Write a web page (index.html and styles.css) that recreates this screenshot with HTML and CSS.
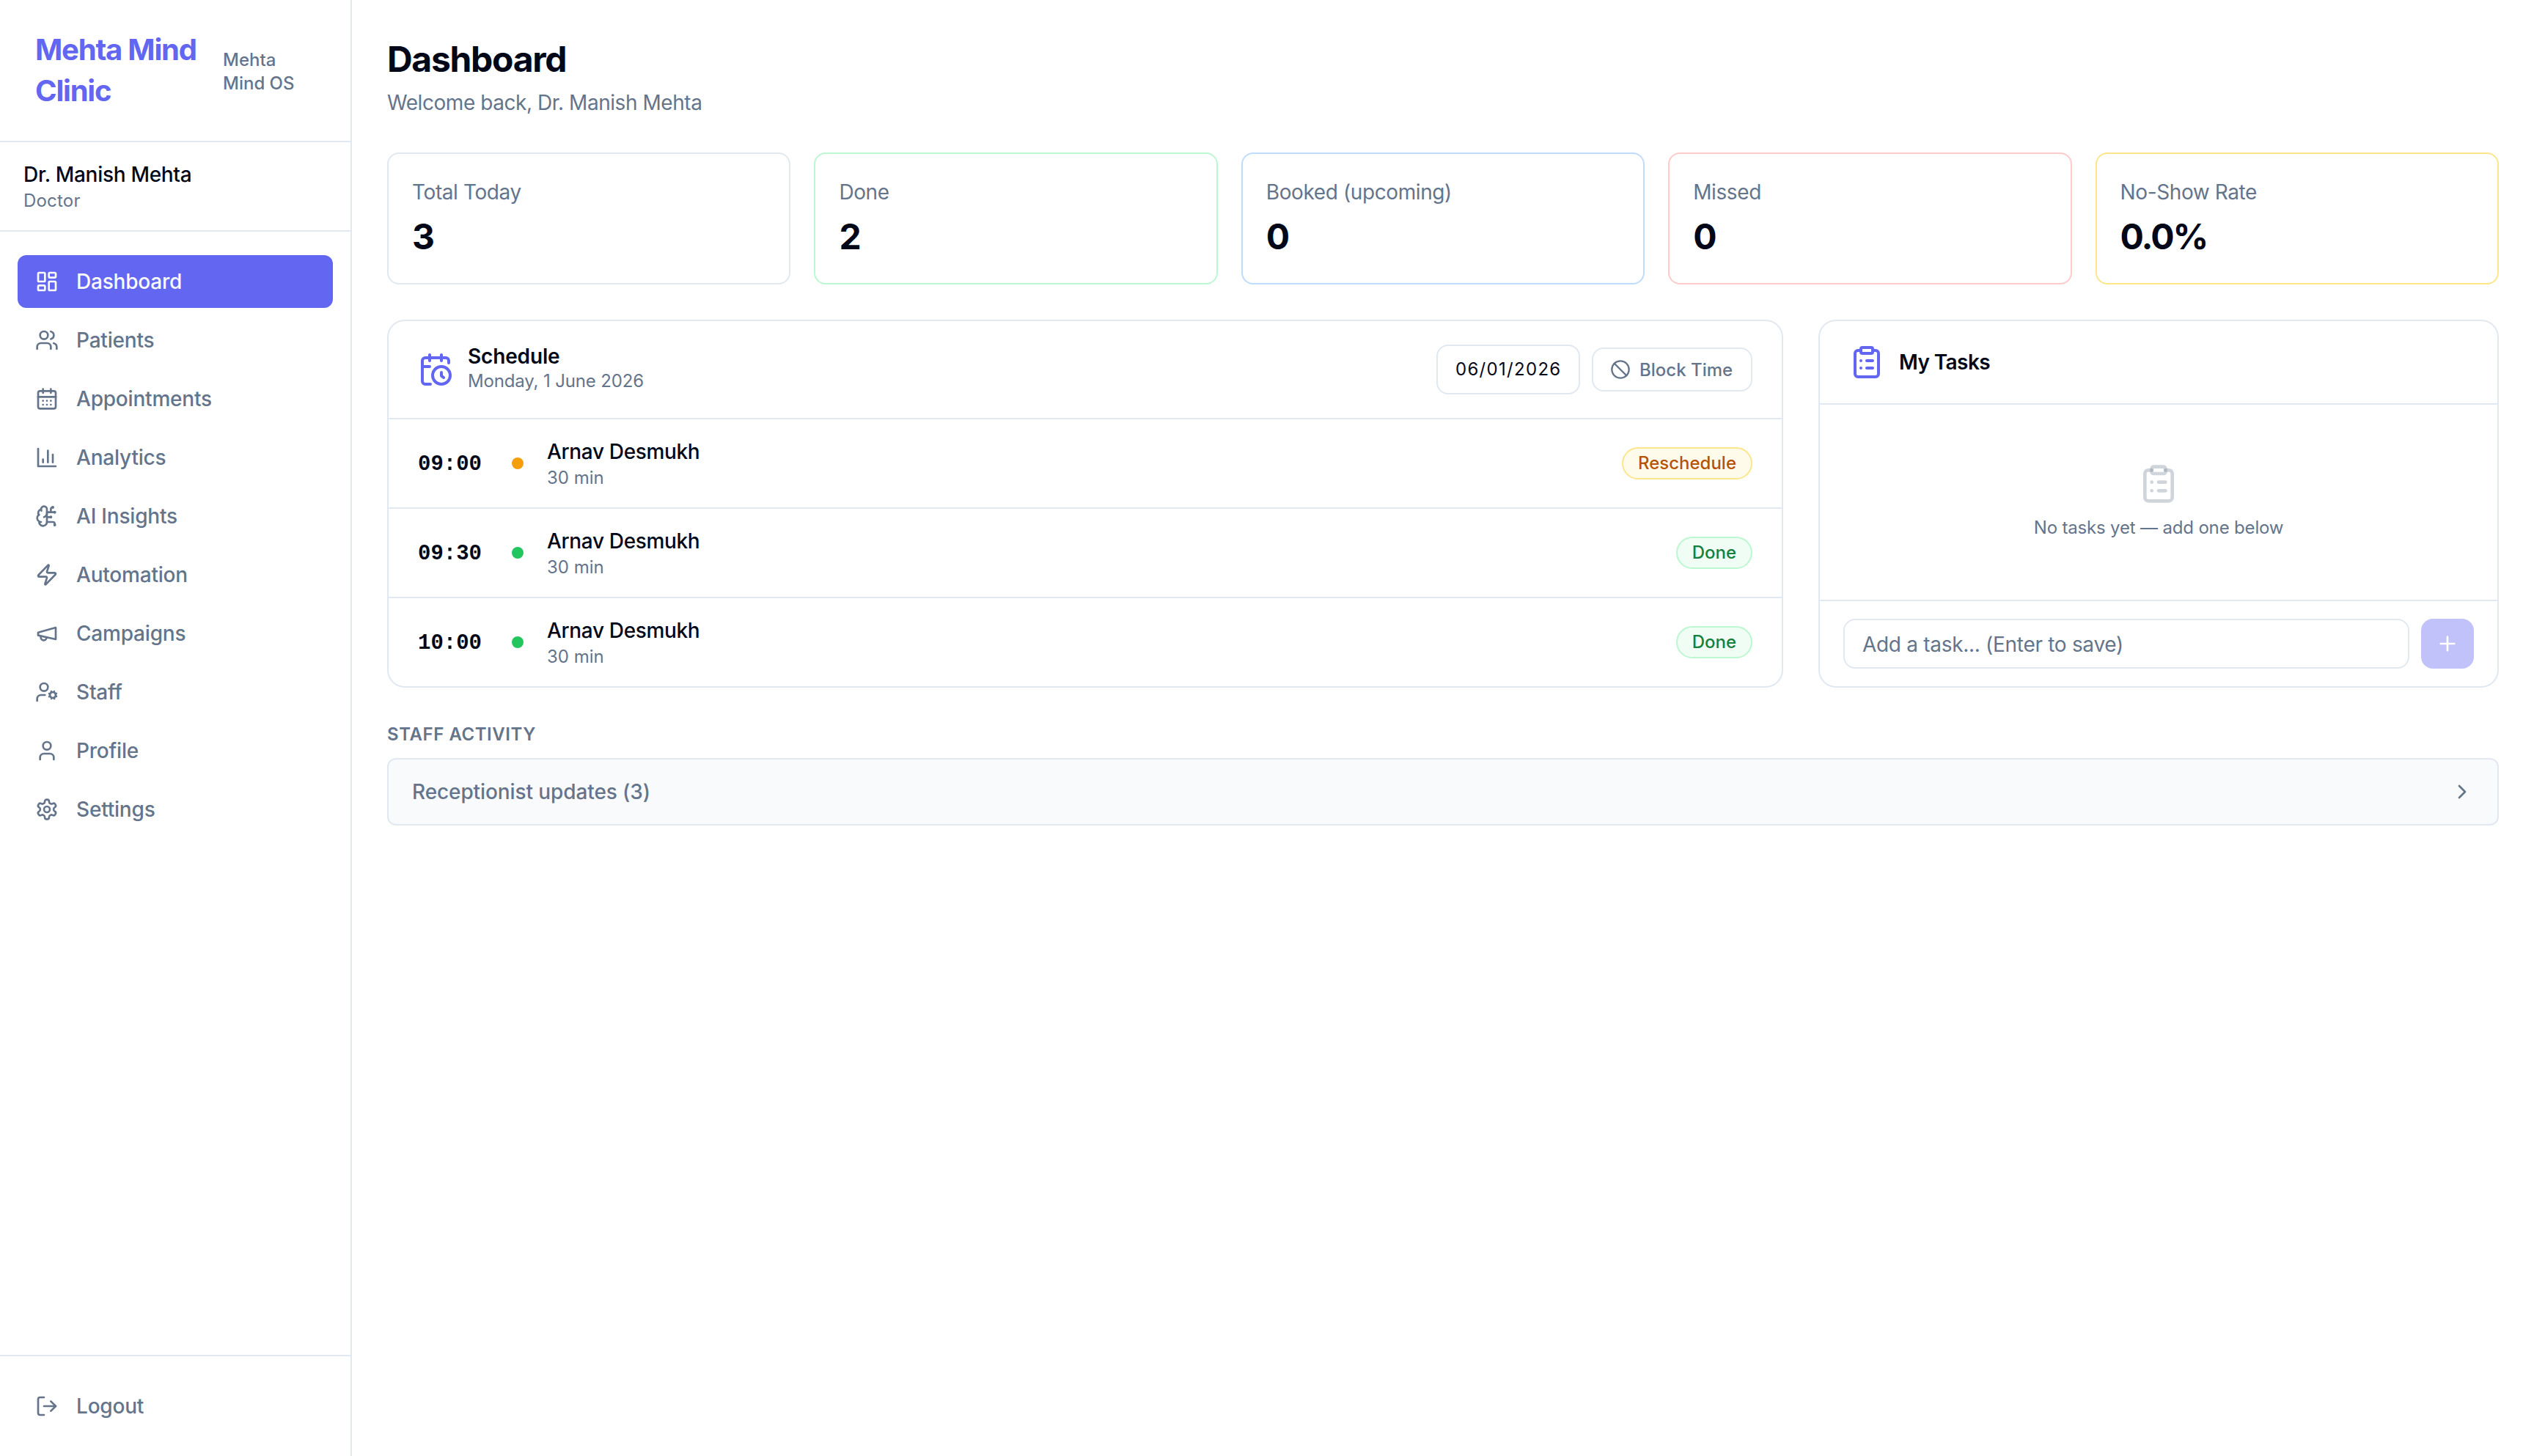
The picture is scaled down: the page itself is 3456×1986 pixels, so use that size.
FILE: index.html
```html
<!DOCTYPE html>
<html lang="en">
<head>
    <meta charset="UTF-8">
    <meta name="viewport" content="width=device-width, initial-scale=1.0">
    <title>Dashboard - Mehta Mind Clinic</title>
    <link rel="stylesheet" href="styles.css">
</head>
<body>
    <div class="layout">
        <aside class="sidebar">
            <div class="brand">
                <div class="brand-name">Mehta Mind Clinic</div>
                <div class="brand-sub">Mehta Mind OS</div>
            </div>
            <div class="user">
                <div class="user-name">Dr. Manish Mehta</div>
                <div class="user-role">Doctor</div>
            </div>
            <nav class="nav">
                <a class="nav-item active">
                    <svg class="icon" viewBox="0 0 24 24"><rect width="7" height="9" x="3" y="3" rx="1"/><rect width="7" height="5" x="14" y="3" rx="1"/><rect width="7" height="9" x="14" y="12" rx="1"/><rect width="7" height="5" x="3" y="16" rx="1"/></svg>
                    Dashboard
                </a>
                <a class="nav-item">
                    <svg class="icon" viewBox="0 0 24 24"><path d="M16 21v-2a4 4 0 0 0-4-4H6a4 4 0 0 0-4 4v2"/><circle cx="9" cy="7" r="4"/><path d="M22 21v-2a4 4 0 0 0-3-3.87"/><path d="M16 3.13a4 4 0 0 1 0 7.75"/></svg>
                    Patients
                </a>
                <a class="nav-item">
                    <svg class="icon" viewBox="0 0 24 24"><path d="M8 2v4"/><path d="M16 2v4"/><rect width="18" height="18" x="3" y="4" rx="2"/><path d="M3 10h18"/><path d="M8 14h.01"/><path d="M12 14h.01"/><path d="M16 14h.01"/><path d="M8 18h.01"/><path d="M12 18h.01"/><path d="M16 18h.01"/></svg>
                    Appointments
                </a>
                <a class="nav-item">
                    <svg class="icon" viewBox="0 0 24 24"><path d="M3 3v18h18"/><path d="M18 17V9"/><path d="M13 17V5"/><path d="M8 17v-3"/></svg>
                    Analytics
                </a>
                <a class="nav-item">
                    <svg class="icon" viewBox="0 0 24 24"><path d="M12 5a3 3 0 1 0-5.997.125 4 4 0 0 0-2.526 5.77 4 4 0 0 0 .556 6.588A4 4 0 1 0 12 18Z"/><path d="M9 13a4.5 4.5 0 0 0 3-4"/><path d="M6.003 5.125A3 3 0 0 0 6.401 6.5"/><path d="M3.477 10.896a4 4 0 0 1 .585-.396"/><path d="M6 18a4 4 0 0 1-1.967-.516"/><path d="M12 13h4"/><path d="M12 18h6a2 2 0 0 1 2 2v1"/><path d="M12 8h8"/><path d="M16 8V5a2 2 0 0 1 2-2"/><circle cx="16" cy="13" r=".5"/><circle cx="18" cy="3" r=".5"/><circle cx="20" cy="21" r=".5"/><circle cx="20" cy="8" r=".5"/></svg>
                    AI Insights
                </a>
                <a class="nav-item">
                    <svg class="icon" viewBox="0 0 24 24"><path d="M4 14a1 1 0 0 1-.78-1.63l9.9-10.2a.5.5 0 0 1 .86.46l-1.92 6.02A1 1 0 0 0 13 10h7a1 1 0 0 1 .78 1.63l-9.9 10.2a.5.5 0 0 1-.86-.46l1.92-6.02A1 1 0 0 0 11 14z"/></svg>
                    Automation
                </a>
                <a class="nav-item">
                    <svg class="icon" viewBox="0 0 24 24"><path d="m3 11 18-5v12L3 14v-3z"/><path d="M11.6 16.8a3 3 0 1 1-5.8-1.6"/></svg>
                    Campaigns
                </a>
                <a class="nav-item">
                    <svg class="icon" viewBox="0 0 24 24"><circle cx="18" cy="15" r="3"/><circle cx="9" cy="7" r="4"/><path d="M10 15H6a4 4 0 0 0-4 4v2"/><path d="m21.7 16.4-.9-.3"/><path d="m15.2 13.9-.9-.3"/><path d="m16.6 18.7.3-.9"/><path d="m19.1 12.2.3-.9"/><path d="m19.6 18.7-.4-1"/><path d="m16.8 12.3-.4-1"/><path d="m14.3 16.6 1-.4"/><path d="m20.7 13.8 1-.4"/></svg>
                    Staff
                </a>
                <a class="nav-item">
                    <svg class="icon" viewBox="0 0 24 24"><path d="M19 21v-2a4 4 0 0 0-4-4H9a4 4 0 0 0-4 4v2"/><circle cx="12" cy="7" r="4"/></svg>
                    Profile
                </a>
                <a class="nav-item">
                    <svg class="icon" viewBox="0 0 24 24"><path d="M12.22 2h-.44a2 2 0 0 0-2 2v.18a2 2 0 0 1-1 1.73l-.43.25a2 2 0 0 1-2 0l-.15-.08a2 2 0 0 0-2.73.73l-.22.38a2 2 0 0 0 .73 2.73l.15.1a2 2 0 0 1 1 1.72v.51a2 2 0 0 1-1 1.74l-.15.09a2 2 0 0 0-.73 2.73l.22.38a2 2 0 0 0 2.73.73l.15-.08a2 2 0 0 1 2 0l.43.25a2 2 0 0 1 1 1.73V20a2 2 0 0 0 2 2h.44a2 2 0 0 0 2-2v-.18a2 2 0 0 1 1-1.73l.43-.25a2 2 0 0 1 2 0l.15.08a2 2 0 0 0 2.73-.73l.22-.39a2 2 0 0 0-.73-2.73l-.15-.08a2 2 0 0 1-1-1.74v-.5a2 2 0 0 1 1-1.74l.15-.09a2 2 0 0 0 .73-2.73l-.22-.38a2 2 0 0 0-2.73-.73l-.15.08a2 2 0 0 1-2 0l-.43-.25a2 2 0 0 1-1-1.73V4a2 2 0 0 0-2-2z"/><circle cx="12" cy="12" r="3"/></svg>
                    Settings
                </a>
            </nav>
            <div class="sidebar-footer">
                <a class="nav-item">
                    <svg class="icon" viewBox="0 0 24 24"><path d="M9 21H5a2 2 0 0 1-2-2V5a2 2 0 0 1 2-2h4"/><path d="m16 17 5-5-5-5"/><path d="M21 12H9"/></svg>
                    Logout
                </a>
            </div>
        </aside>

        <main class="main">
            <header class="page-header">
                <h1>Dashboard</h1>
                <p>Welcome back, Dr. Manish Mehta</p>
            </header>

            <section class="stats">
                <div class="stat">
                    <div class="stat-label">Total Today</div>
                    <div class="stat-value">3</div>
                </div>
                <div class="stat green">
                    <div class="stat-label">Done</div>
                    <div class="stat-value">2</div>
                </div>
                <div class="stat blue">
                    <div class="stat-label">Booked (upcoming)</div>
                    <div class="stat-value">0</div>
                </div>
                <div class="stat red">
                    <div class="stat-label">Missed</div>
                    <div class="stat-value">0</div>
                </div>
                <div class="stat amber">
                    <div class="stat-label">No-Show Rate</div>
                    <div class="stat-value">0.0%</div>
                </div>
            </section>

            <div class="panels">
                <section class="panel schedule">
                    <div class="panel-header">
                        <svg class="icon icon-lg" viewBox="0 0 24 24"><path d="M21 7.5V6a2 2 0 0 0-2-2H5a2 2 0 0 0-2 2v14a2 2 0 0 0 2 2h3.5"/><path d="M16 2v4"/><path d="M8 2v4"/><path d="M3 10h5"/><path d="M17.5 17.5 16 16.3V14"/><circle cx="16" cy="16" r="6"/></svg>
                        <div class="panel-titles">
                            <h2>Schedule</h2>
                            <p>Monday, 1 June 2026</p>
                        </div>
                        <div class="date-input">06/01/2026</div>
                        <button class="block-btn">
                            <svg class="icon icon-sm" viewBox="0 0 24 24"><circle cx="12" cy="12" r="10"/><path d="m4.9 4.9 14.2 14.2"/></svg>
                            Block Time
                        </button>
                    </div>
                    <div class="row">
                        <div class="row-time">09:00</div>
                        <span class="dot amber"></span>
                        <div class="row-info">
                            <div class="row-name">Arnav Desmukh</div>
                            <div class="row-sub">30 min</div>
                        </div>
                        <span class="badge amber">Reschedule</span>
                    </div>
                    <div class="row">
                        <div class="row-time">09:30</div>
                        <span class="dot green"></span>
                        <div class="row-info">
                            <div class="row-name">Arnav Desmukh</div>
                            <div class="row-sub">30 min</div>
                        </div>
                        <span class="badge green">Done</span>
                    </div>
                    <div class="row">
                        <div class="row-time">10:00</div>
                        <span class="dot green"></span>
                        <div class="row-info">
                            <div class="row-name">Arnav Desmukh</div>
                            <div class="row-sub">30 min</div>
                        </div>
                        <span class="badge green">Done</span>
                    </div>
                </section>

                <section class="panel tasks">
                    <div class="panel-header">
                        <svg class="icon icon-lg" viewBox="0 0 24 24"><rect width="8" height="4" x="8" y="2" rx="1"/><path d="M16 4h2a2 2 0 0 1 2 2v14a2 2 0 0 1-2 2H6a2 2 0 0 1-2-2V6a2 2 0 0 1 2-2h2"/><path d="M12 11h4"/><path d="M12 16h4"/><path d="M8 11h.01"/><path d="M8 16h.01"/></svg>
                        <h2>My Tasks</h2>
                    </div>
                    <div class="tasks-empty">
                        <svg class="icon icon-empty" viewBox="0 0 24 24"><rect width="8" height="4" x="8" y="2" rx="1"/><path d="M16 4h2a2 2 0 0 1 2 2v14a2 2 0 0 1-2 2H6a2 2 0 0 1-2-2V6a2 2 0 0 1 2-2h2"/><path d="M12 11h4"/><path d="M12 16h4"/><path d="M8 11h.01"/><path d="M8 16h.01"/></svg>
                        <p>No tasks yet — add one below</p>
                    </div>
                    <div class="tasks-form">
                        <input type="text" class="task-input" placeholder="Add a task... (Enter to save)">
                        <button class="add-btn">
                            <svg class="icon" viewBox="0 0 24 24"><path d="M5 12h14"/><path d="M12 5v14"/></svg>
                        </button>
                    </div>
                </section>
            </div>

            <section class="activity">
                <h3>Staff Activity</h3>
                <div class="activity-row">
                    Receptionist updates (3)
                    <svg class="icon" viewBox="0 0 24 24"><path d="m9 18 6-6-6-6"/></svg>
                </div>
            </section>
        </main>
    </div>
</body>
</html>
```
FILE: styles.css
```css
* {
    box-sizing: border-box;
}
body {
    margin: 0;
    font-family: Inter, "Liberation Sans", sans-serif;
    font-size: 28px;
    line-height: 40px;
    color: #020817;
    background: #fff;
}
h1, h2, h3, p {
    margin: 0;
}
button, input {
    font-family: inherit;
}
.layout {
    display: flex;
    height: 100vh;
}
.icon {
    width: 32px;
    height: 32px;
    flex-shrink: 0;
    fill: none;
    stroke: currentColor;
    stroke-width: 2;
    stroke-linecap: round;
    stroke-linejoin: round;
}
.icon-sm {
    width: 28px;
    height: 28px;
}
.icon-lg {
    width: 48px;
    height: 48px;
    color: #6366f1;
}

/* Sidebar */
.sidebar {
    display: flex;
    flex-direction: column;
    width: 480px;
    flex-shrink: 0;
    border-right: 2px solid #e2e8f0;
}
.brand {
    display: flex;
    align-items: center;
    gap: 16px;
    padding: 40px 48px;
    border-bottom: 2px solid #e2e8f0;
}
.brand-name {
    width: 240px;
    font-size: 40px;
    line-height: 56px;
    font-weight: 700;
    letter-spacing: -1.2px;
    color: #6366f1;
}
.brand-sub {
    width: 110px;
    padding-top: 4px;
    font-size: 24px;
    line-height: 32px;
    font-weight: 500;
    color: #64748b;
}
.user {
    padding: 24px 32px;
    border-bottom: 2px solid #e2e8f0;
}
.user-name {
    font-weight: 500;
    letter-spacing: -0.3px;
}
.user-role {
    font-size: 24px;
    line-height: 32px;
    letter-spacing: 0.2px;
    color: #64748b;
}
.nav {
    flex: 1;
    display: flex;
    flex-direction: column;
    gap: 8px;
    padding: 32px 24px;
}
.nav-item {
    display: flex;
    align-items: center;
    gap: 24px;
    height: 72px;
    padding: 0 24px;
    border-radius: 12px;
    font-weight: 500;
    letter-spacing: -0.2px;
    color: #64748b;
}
.nav-item.active {
    background: #6366f1;
    color: #f8fafc;
}
.sidebar-footer {
    padding: 32px 24px;
    border-top: 2px solid #e2e8f0;
}

/* Main */
.main {
    flex: 1;
    padding: 48px;
}
.page-header h1 {
    padding-top: 2px;
    font-size: 48px;
    line-height: 62px;
    font-weight: 700;
    letter-spacing: -1.3px;
}
.page-header p {
    margin-top: 8px;
    letter-spacing: -0.45px;
    color: #64748b;
}
.stats {
    display: grid;
    grid-template-columns: repeat(5, 1fr);
    gap: 32px;
    margin-top: 48px;
}
.stat {
    padding: 32px;
    border: 2px solid #e2e8f0;
    border-radius: 16px;
}
.stat.green {
    border-color: #bbf7d0;
}
.stat.blue {
    border-color: #bfdbfe;
}
.stat.red {
    border-color: #fecaca;
}
.stat.amber {
    border-color: #fde68a;
}
.stat-label {
    letter-spacing: -0.4px;
    color: #64748b;
}
.stat-value {
    margin-top: 10px;
    font-size: 48px;
    line-height: 62px;
    font-weight: 700;
    letter-spacing: -2px;
}

/* Panels */
.panels {
    display: grid;
    grid-template-columns: repeat(3, 1fr);
    gap: 48px;
    margin-top: 48px;
}
.panel {
    display: flex;
    flex-direction: column;
    border: 2px solid #e2e8f0;
    border-radius: 24px;
}
.schedule {
    grid-column: span 2;
}
.panel-header {
    display: flex;
    align-items: center;
    padding: 32px 40px;
    border-bottom: 2px solid #e2e8f0;
}
.panel-header h2 {
    font-size: 28px;
    line-height: 28px;
    font-weight: 600;
    letter-spacing: -0.15px;
}
.tasks h2 {
    margin-left: 20px;
    letter-spacing: -0.6px;
}
.panel-titles {
    flex: 1;
    margin-left: 20px;
}
.panel-titles p {
    margin-top: 4px;
    font-size: 24px;
    line-height: 32px;
    letter-spacing: -0.15px;
    color: #64748b;
}
.date-input {
    width: 196px;
    height: 68px;
    padding: 0 24px;
    border: 2px solid #e2e8f0;
    border-radius: 16px;
    font-size: 24px;
    line-height: 64px;
    letter-spacing: 1.3px;
    white-space: nowrap;
}
.block-btn {
    display: flex;
    align-items: center;
    gap: 12px;
    width: 219px;
    height: 60px;
    margin-left: 16px;
    padding: 0 23px;
    border: 2px solid #e2e8f0;
    border-radius: 16px;
    background: #fff;
    font-size: 24px;
    font-weight: 500;
    white-space: nowrap;
    color: #64748b;
}
.row {
    display: flex;
    align-items: center;
    gap: 32px;
    height: 122px;
    padding: 0 40px;
    border-bottom: 2px solid #e2e8f0;
}
.row:last-child {
    height: 120px;
    border-bottom: none;
}
.row-time {
    width: 96px;
    padding-top: 4px;
    font-family: "Liberation Mono", monospace;
    font-size: 29px;
    font-weight: 700;
}
.dot {
    width: 16px;
    height: 16px;
    border-radius: 50%;
}
.dot.amber {
    background: #f59e0b;
}
.dot.green {
    background: #22c55e;
}
.row-info {
    flex: 1;
}
.row-name {
    font-weight: 500;
    letter-spacing: -0.35px;
}
.row-sub {
    font-size: 24px;
    line-height: 32px;
    color: #64748b;
}
.badge {
    padding: 4px 20px;
    border: 2px solid;
    border-radius: 999px;
    font-size: 24px;
    line-height: 32px;
    font-weight: 500;
}
.badge.amber {
    background: #fffbeb;
    border-color: #fde68a;
    color: #b45309;
}
.badge.green {
    background: #f0fdf4;
    border-color: #bbf7d0;
    color: #15803d;
}

/* Tasks */
.tasks-empty {
    flex: 1;
    display: flex;
    flex-direction: column;
    align-items: center;
    gap: 16px;
    padding-top: 80px;
    color: #64748b;
}
.icon-empty {
    width: 56px;
    height: 56px;
    stroke-opacity: 0.3;
}
.tasks-empty p {
    font-size: 24px;
    line-height: 32px;
    letter-spacing: -0.17px;
}
.tasks-form {
    display: flex;
    gap: 16px;
    padding: 24px 32px;
    border-top: 2px solid #e2e8f0;
}
.task-input {
    flex: 1;
    height: 68px;
    padding: 2px 24px 0;
    border: 2px solid #e2e8f0;
    border-radius: 16px;
    font-size: 28px;
    letter-spacing: -0.3px;
}
.task-input::placeholder {
    color: #64748b;
}
.add-btn {
    display: flex;
    align-items: center;
    justify-content: center;
    width: 72px;
    height: 68px;
    padding: 0;
    border: none;
    border-radius: 16px;
    background: #c1c2f9;
    color: #fff;
}

/* Staff activity */
.activity {
    margin-top: 48px;
}
.activity h3 {
    font-size: 24px;
    line-height: 32px;
    font-weight: 600;
    letter-spacing: 0.55px;
    text-transform: uppercase;
    color: #64748b;
}
.activity-row {
    display: flex;
    align-items: center;
    justify-content: space-between;
    height: 92px;
    margin-top: 16px;
    padding: 0 32px;
    border: 2px solid #e2e8f0;
    border-radius: 12px;
    background: #f9fafc;
    font-weight: 500;
    letter-spacing: -0.1px;
    color: #64748b;
}
```
